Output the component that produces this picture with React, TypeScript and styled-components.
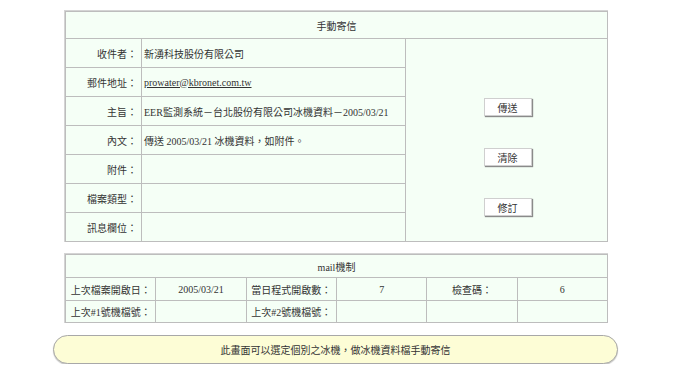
import React from "react";
import styled, { createGlobalStyle } from "styled-components";

const Global = createGlobalStyle`
  html, body { margin: 0; padding: 0; background: #ffffff; }
  body { font-family: "Liberation Serif", "Noto Sans CJK TC", serif; font-size: 10px; color: #333; }
`;

const Page = styled.div`
  display: flex;
  flex-direction: column;
  align-items: flex-start;
  padding: 10px 0 0 64px;
  width: 674px;
  box-sizing: border-box;
`;

const MailForm = styled.div`
  width: 544px;
  box-sizing: border-box;
  display: grid;
  grid-template-columns: 75px 263px 1fr;
  grid-template-rows: 26px repeat(7, 28px);
  gap: 1px;
  padding: 1px;
  background: #bdbdbd;
  border-top: 1px solid #d4d4d4;
  border-left: 1px solid #d4d4d4;
`;

const Cell = styled.div<{ $align?: "left" | "right" | "center" }>`
  background: #f5fff6;
  display: flex;
  align-items: center;
  justify-content: ${(p) =>
    p.$align === "right" ? "flex-end" : p.$align === "center" ? "center" : "flex-start"};
  padding: ${(p) => (p.$align === "right" ? "0 4px 0 0" : p.$align === "left" ? "0 0 0 2px" : "0")};
  white-space: nowrap;
  overflow: hidden;
`;

const Header = styled(Cell)<{ $span: number }>`
  grid-column: 1 / span ${(p) => p.$span};
`;

const EmailLink = styled.span`
  text-decoration: underline;
`;

const ActionColumn = styled.div`
  grid-column: 3;
  grid-row: 2 / span 7;
  background: #f5fff6;
  display: flex;
  flex-direction: column;
  align-items: center;
  padding-top: 59px;
  gap: 32px;
`;

const ActionButton = styled.button`
  width: 48px;
  height: 18px;
  padding: 0;
  margin-left: 2px;
  background: #ffffff;
  border: 1px solid #cfcfcf;
  box-shadow: 1px 1px 1px #8a8a8a;
  font-family: "Liberation Serif", "Noto Sans CJK TC", serif;
  font-size: 10px;
  color: #333;
  cursor: pointer;
`;

const StatsGrid = styled.div`
  margin-top: 11px;
  width: 544px;
  box-sizing: border-box;
  display: grid;
  grid-template-columns: repeat(6, 1fr);
  grid-template-rows: 22px 22px 21px;
  gap: 1px;
  padding: 1px;
  background: #bdbdbd;
  border-top: 1px solid #d4d4d4;
  border-left: 1px solid #d4d4d4;
`;

const Banner = styled.div`
  margin: 12px 0 0 -11px;
  width: 565px;
  height: 29px;
  box-sizing: border-box;
  border: 1px solid #a8a8a8;
  border-radius: 15px;
  background: #fdfdd6;
  box-shadow: 0 1px 1px #c8c8c8;
  display: flex;
  align-items: center;
  justify-content: center;
`;

const rows: { label: string; value: React.ReactNode }[] = [
  { label: "收件者：", value: "新湧科技股份有限公司" },
  { label: "郵件地址：", value: <EmailLink>prowater@kbronet.com.tw</EmailLink> },
  { label: "主旨：", value: "EER監測系統－台北股份有限公司冰機資料－2005/03/21" },
  { label: "內文：", value: "傳送 2005/03/21 冰機資料，如附件。" },
  { label: "附件：", value: "" },
  { label: "檔案類型：", value: "" },
  { label: "訊息欄位：", value: "" },
];

const stats = [
  "上次檔案開啟日：", "2005/03/21", "當日程式開啟數：", "7", "檢查碼：", "6",
  "上次#1號機檔號：", "", "上次#2號機檔號：", "", "", "",
];

export default function App() {
  return (
    <>
      <Global />
      <Page>
        <MailForm>
          <Header $span={3} $align="center">手動寄信</Header>
          {rows.map((r, i) => (
            <React.Fragment key={r.label}>
              <Cell $align="right" style={{ gridRow: i + 2, gridColumn: 1 }}>{r.label}</Cell>
              <Cell $align="left" style={{ gridRow: i + 2, gridColumn: 2 }}>{r.value}</Cell>
            </React.Fragment>
          ))}
          <ActionColumn>
            <ActionButton>傳送</ActionButton>
            <ActionButton>清除</ActionButton>
            <ActionButton>修訂</ActionButton>
          </ActionColumn>
        </MailForm>
        <StatsGrid>
          <Header $span={6} $align="center">mail機制</Header>
          {stats.map((s, i) => (
            <Cell key={i} $align="center">{s}</Cell>
          ))}
        </StatsGrid>
        <Banner>此畫面可以選定個別之冰機，做冰機資料檔手動寄信</Banner>
      </Page>
    </>
  );
}
